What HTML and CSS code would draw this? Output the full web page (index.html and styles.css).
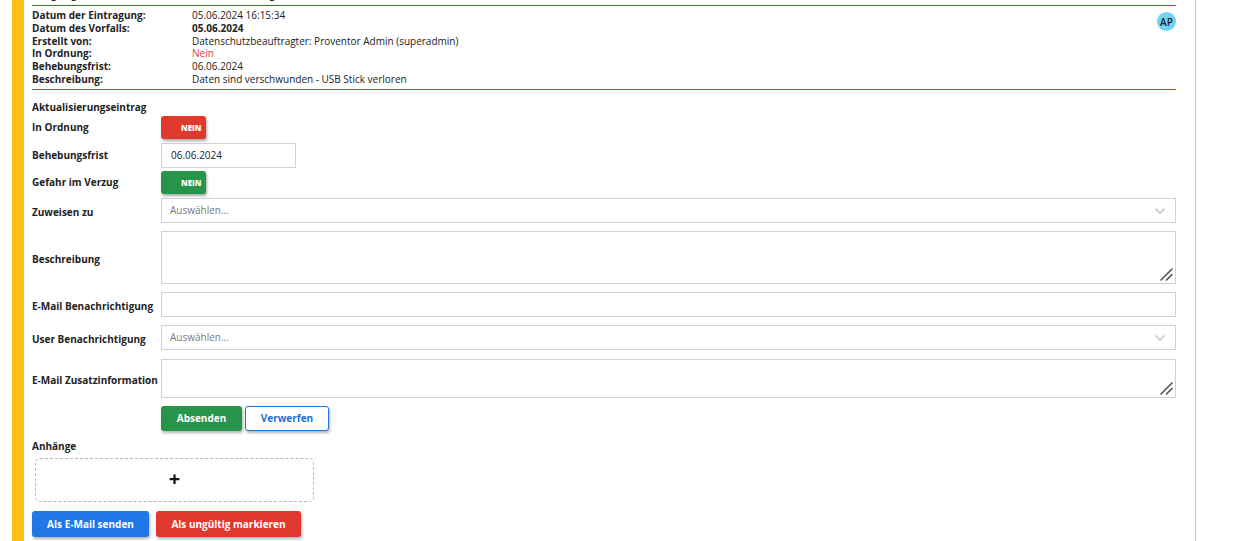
FILE: index.html
```html
<!DOCTYPE html>
<html lang="de">
<head>
<meta charset="utf-8">
<title>Vorfall</title>
<link rel="stylesheet" href="styles.css">
</head>
<body>
<div class="card">
  <h2 class="title">Vorgang Datenschutzvorfall: Datenverlust [g]</h2>
  <div class="details">
    <div class="info">
      <span class="k">Datum der Eintragung:</span><span class="v">05.06.2024 16:15:34</span>
      <span class="k">Datum des Vorfalls:</span><span class="v strong">05.06.2024</span>
      <span class="k">Erstellt von:</span><span class="v">Datenschutzbeauftragter: Proventor Admin (superadmin)</span>
      <span class="k">In Ordnung:</span><span class="v red">Nein</span>
      <span class="k">Behebungsfrist:</span><span class="v">06.06.2024</span>
      <span class="k">Beschreibung:</span><span class="v">Daten sind verschwunden - USB Stick verloren</span>
    </div>
    <span class="avatar">AP</span>
  </div>

  <div class="update">
    <div class="section-title">Aktualisierungseintrag</div>

    <div class="row r-toggle1">
      <label class="lbl">In Ordnung</label>
      <div><span class="toggle toggle-red">NEIN</span></div>
    </div>
    <div class="row r-date">
      <label class="lbl">Behebungsfrist</label>
      <div><input class="input date" type="text" value="06.06.2024"></div>
    </div>
    <div class="row r-toggle2">
      <label class="lbl">Gefahr im Verzug</label>
      <div><span class="toggle toggle-green">NEIN</span></div>
    </div>
    <div class="row">
      <label class="lbl">Zuweisen zu</label>
      <div class="select"><span class="ph">Auswählen...</span>
        <svg class="chev" width="12" height="8" viewBox="0 0 12 8"><polyline points="1.5,1.5 6,6 10.5,1.5" fill="none" stroke="#c8c8c8" stroke-width="1.6"/></svg>
      </div>
    </div>
    <div class="row">
      <label class="lbl">Beschreibung</label>
      <div class="ta-wrap">
        <textarea class="textarea ta-big"></textarea>
        <svg class="grip" width="13" height="13" viewBox="0 0 13 13"><path d="M1 12 L12 1 M6.5 12 L12 6.5" stroke="#4a4a4a" stroke-width="1.5" stroke-linecap="round" fill="none"/></svg>
      </div>
    </div>
    <div class="row">
      <label class="lbl">E-Mail Benachrichtigung</label>
      <input class="input full" type="text">
    </div>
    <div class="row r-user">
      <label class="lbl">User Benachrichtigung</label>
      <div class="select"><span class="ph">Auswählen...</span>
        <svg class="chev" width="12" height="8" viewBox="0 0 12 8"><polyline points="1.5,1.5 6,6 10.5,1.5" fill="none" stroke="#c8c8c8" stroke-width="1.6"/></svg>
      </div>
    </div>
    <div class="row">
      <label class="lbl">E-Mail Zusatzinformation</label>
      <div class="ta-wrap">
        <textarea class="textarea ta-small"></textarea>
        <svg class="grip" width="13" height="13" viewBox="0 0 13 13"><path d="M1 12 L12 1 M6.5 12 L12 6.5" stroke="#4a4a4a" stroke-width="1.5" stroke-linecap="round" fill="none"/></svg>
      </div>
    </div>
    <div class="form-actions">
      <button class="btn btn-green">Absenden</button>
      <button class="btn btn-outline">Verwerfen</button>
    </div>
  </div>

  <div class="attach">
    <div class="attach-title">Anhänge</div>
    <div class="dropzone"><span class="plus">+</span></div>
  </div>

  <div class="actions">
    <button class="btn btn-blue">Als E-Mail senden</button>
    <button class="btn btn-red">Als ungültig markieren</button>
  </div>
</div>
</body>
</html>
```
FILE: styles.css
```css
* { box-sizing: border-box; }
html, body { margin: 0; padding: 0; background: #fff; }
body {
  font-family: "Open Sans", "Noto Sans", sans-serif;
  font-size: 10px;
  color: #222;
  overflow: hidden;
}
.card {
  margin-left: 12px;
  width: 1184px;
  border-left: 12px solid #f9c015;
  border-right: 1px solid #f3c13a;
  padding: 0 19px 40px 8px;
  min-height: 600px;
}
.title {
  margin: -12px 0 0 0;
  padding-bottom: 5px;
  font-size: 11px;
  line-height: 12px;
  font-weight: 700;
  border-bottom: 1px solid #bf3b2e;
}
.details {
  display: flex;
  justify-content: space-between;
  align-items: flex-start;
  padding: 3px 0 3px 0;
  border-bottom: 1px solid #a8453a;
}
.info {
  display: grid;
  grid-template-columns: 160px auto;
  line-height: 12.8px;
}
.k { font-weight: 700; }
.strong { font-weight: 700; }
.red { color: #e53935; }
.avatar {
  margin-top: 3px;
  width: 19px;
  height: 19px;
  border-radius: 50%;
  background: #72d3f0;
  color: #1a2230;
  font-size: 10px;
  font-weight: 600;
  display: flex;
  align-items: center;
  justify-content: center;
  letter-spacing: 0.2px;
}
.update { padding-top: 10px; }
.section-title {
  font-weight: 700;
  line-height: 14px;
  margin-bottom: 2px;
}
.row {
  display: grid;
  grid-template-columns: 129px 1fr;
  align-items: center;
  margin-bottom: 8px;
}
.r-toggle1 { margin-bottom: 4px; }
.r-date { margin-bottom: 3px; }
.r-toggle2 { margin-bottom: 4px; }
.r-user { margin-bottom: 9px; }
.lbl {
  font-weight: 700;
  padding-top: 4px;
  white-space: nowrap;
}
.r-toggle1 .lbl, .r-date .lbl, .r-toggle2 .lbl { padding-top: 0; }
.toggle {
  display: inline-flex;
  align-items: center;
  width: 45px;
  height: 23px;
  padding-left: 20px;
  border-radius: 3px;
  color: #fff;
  font-size: 8px;
  font-weight: 800;
  box-shadow: 1px 2px 3px rgba(0,0,0,0.35);
}
.toggle-red { background: #e2392e; }
.toggle-green { background: #26954a; }
.input, .select, .textarea {
  display: block;
  border: 1px solid #cfd3d7;
  border-radius: 0;
  background: #fff;
  font-family: inherit;
  font-size: 10px;
  color: #222;
  outline: none;
}
.input { height: 25px; padding: 0 9px; margin: 0; }
.date { width: 135px; }
.full { width: 100%; }
.select {
  height: 25px;
  display: flex;
  align-items: center;
  justify-content: space-between;
  padding: 0 9px 0 8px;
}
.ph { color: #7a7a7a; }
.chev { display: block; margin-top: 2px; }
.ta-wrap { position: relative; }
.textarea { width: 100%; margin: 0; padding: 4px 8px; resize: none; }
.grip { position: absolute; right: 3px; bottom: 3px; display: block; }
.ta-big { height: 53px; }
.ta-small { height: 39px; }
.form-actions {
  display: flex;
  gap: 3px;
  padding-left: 129px;
}
.btn {
  font-family: inherit;
  font-size: 10px;
  font-weight: 700;
  height: 25px;
  border-radius: 3px;
  border: 1px solid transparent;
  padding: 0;
  cursor: pointer;
  box-shadow: 1px 2px 3px rgba(0,0,0,0.3);
}
.btn-green { background: #26954a; color: #fff; width: 81px; }
.btn-outline { background: #fff; color: #1e6fd9; border-color: #1f75e0; width: 84px; }
.btn-blue { background: #1f78e6; color: #fff; width: 117px; height: 26px; }
.btn-red { background: #e0382e; color: #fff; width: 145px; height: 26px; }
.attach { padding-top: 8px; }
.attach-title { font-weight: 700; line-height: 14px; }
.dropzone {
  margin: 5px 0 0 3px;
  width: 279px;
  height: 44px;
  border: 1px dashed #b9b9b9;
  border-radius: 5px;
  display: flex;
  align-items: center;
  justify-content: center;
}
.plus { font-size: 20px; font-weight: 700; color: #111; line-height: 1; margin-top: -2px; }
.actions {
  display: flex;
  gap: 7px;
  margin-top: 9px;
}
```
